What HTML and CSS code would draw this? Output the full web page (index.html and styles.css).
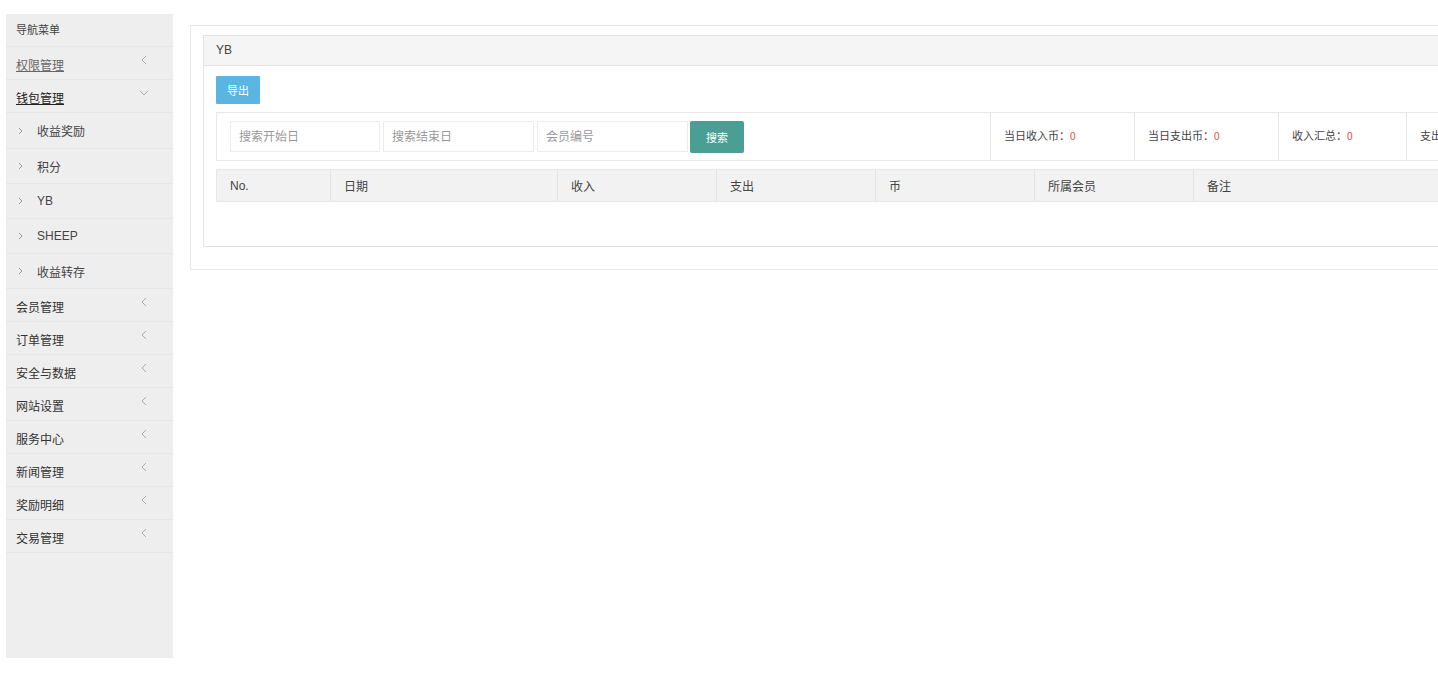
FILE: index.html
```html
<!DOCTYPE html>
<html lang="zh-CN">
<head>
<meta charset="utf-8">
<title>YB</title>
<link rel="stylesheet" href="styles.css">
</head>
<body>
<div class="page">
  <aside class="sidebar">
    <div class="side-title">导航菜单</div>
    <div class="side-item"><span class="link muted">权限管理</span><svg class="chev" viewBox="0 0 6 10"><path d="M5 1 1 5l4 4"/></svg></div>
    <div class="side-item"><span class="link">钱包管理</span><svg class="chev down" viewBox="0 0 10 6"><path d="M1 1l4 4 4-4"/></svg></div>
    <div class="sub-item"><svg class="sub-chev" viewBox="0 0 5 8"><path d="M1 1l3 3-3 3"/></svg><span>收益奖励</span></div>
    <div class="sub-item"><svg class="sub-chev" viewBox="0 0 5 8"><path d="M1 1l3 3-3 3"/></svg><span>积分</span></div>
    <div class="sub-item"><svg class="sub-chev" viewBox="0 0 5 8"><path d="M1 1l3 3-3 3"/></svg><span>YB</span></div>
    <div class="sub-item"><svg class="sub-chev" viewBox="0 0 5 8"><path d="M1 1l3 3-3 3"/></svg><span>SHEEP</span></div>
    <div class="sub-item"><svg class="sub-chev" viewBox="0 0 5 8"><path d="M1 1l3 3-3 3"/></svg><span>收益转存</span></div>
    <div class="side-item"><span>会员管理</span><svg class="chev" viewBox="0 0 6 10"><path d="M5 1 1 5l4 4"/></svg></div>
    <div class="side-item"><span>订单管理</span><svg class="chev" viewBox="0 0 6 10"><path d="M5 1 1 5l4 4"/></svg></div>
    <div class="side-item"><span>安全与数据</span><svg class="chev" viewBox="0 0 6 10"><path d="M5 1 1 5l4 4"/></svg></div>
    <div class="side-item"><span>网站设置</span><svg class="chev" viewBox="0 0 6 10"><path d="M5 1 1 5l4 4"/></svg></div>
    <div class="side-item"><span>服务中心</span><svg class="chev" viewBox="0 0 6 10"><path d="M5 1 1 5l4 4"/></svg></div>
    <div class="side-item"><span>新闻管理</span><svg class="chev" viewBox="0 0 6 10"><path d="M5 1 1 5l4 4"/></svg></div>
    <div class="side-item"><span>奖励明细</span><svg class="chev" viewBox="0 0 6 10"><path d="M5 1 1 5l4 4"/></svg></div>
    <div class="side-item"><span>交易管理</span><svg class="chev" viewBox="0 0 6 10"><path d="M5 1 1 5l4 4"/></svg></div>
  </aside>

  <main class="main">
    <div class="outer">
      <div class="panel">
        <div class="panel-head">YB</div>
        <div class="panel-body">
          <button class="btn-export">导出</button>
          <div class="search-row">
            <div class="search-form">
              <input class="inp i1" placeholder="搜索开始日">
              <input class="inp" placeholder="搜索结束日">
              <input class="inp" placeholder="会员编号">
              <button class="btn-search">搜索</button>
            </div>
            <div class="stat s1">当日收入币：<b>0</b></div>
            <div class="stat s2">当日支出币：<b>0</b></div>
            <div class="stat s3">收入汇总：<b>0</b></div>
            <div class="stat s4">支出汇总：<b>0</b></div>
          </div>
          <div class="thead">
            <div class="th c1">No.</div>
            <div class="th c2">日期</div>
            <div class="th c3">收入</div>
            <div class="th c3">支出</div>
            <div class="th c3">币</div>
            <div class="th c3">所属会员</div>
            <div class="th c7">备注</div>
          </div>
        </div>
      </div>
    </div>
  </main>
</div>
</body>
</html>
```

FILE: styles.css
```css
html, body {
  margin: 0;
  padding: 0;
  overflow: hidden;
  background: #fff;
}
body {
  font-family: "Liberation Sans", "Noto Sans CJK SC", sans-serif;
  font-size: 12px;
  color: #333;
}
.page {
  display: flex;
  align-items: flex-start;
  padding: 14px 0 0 6px;
  width: 1700px;
}
.sidebar {
  width: 167px;
  height: 644px;
  background: #eeeeee;
  flex: none;
}
.side-title {
  height: 33px;
  line-height: 33px;
  padding-left: 10px;
  font-size: 11px;
  border-bottom: 1px solid #e6e6e6;
  box-sizing: border-box;
  color: #444;
}
.side-item {
  height: 33px;
  box-sizing: border-box;
  border-bottom: 1px solid #e6e6e6;
  display: flex;
  align-items: center;
  justify-content: space-between;
  padding: 0 26px 0 10px;
  color: #333;
}
.side-item span {
  position: relative;
  top: 1px;
}
.link {
  text-decoration: underline;
  color: #222;
}
.link.muted {
  color: #666;
}
.chev {
  width: 6px;
  height: 10px;
  margin-top: -6px;
  fill: none;
  stroke: #aaa;
  stroke-width: 1;
}
.chev.down {
  width: 10px;
  height: 6px;
  margin-right: -2px;
}
.sub-item {
  height: 35px;
  box-sizing: border-box;
  border-bottom: 1px solid #e6e6e6;
  display: flex;
  align-items: center;
  padding-left: 12px;
  color: #444;
}
.sub-item:nth-of-type(4) { height: 36px; }
.sub-item:last-of-type { height: 36px; }
.sub-chev {
  width: 5px;
  height: 8px;
  fill: none;
  stroke: #999;
  stroke-width: 1;
  margin-right: 14px;
}
.main {
  flex: none;
  padding: 11px 0 0 17px;
}
.outer {
  width: 1500px;
  border: 1px solid #e8e8e8;
  padding: 9px 0 22px 12px;
}
.panel {
  border: 1px solid #e3e3e3;
  height: 210px;
}
.panel-head {
  height: 29px;
  line-height: 29px;
  background: #f5f5f5;
  border-bottom: 1px solid #e3e3e3;
  padding-left: 12px;
  color: #444;
}
.panel-body {
  padding: 10px 0 0 12px;
}
.btn-export {
  display: block;
  width: 44px;
  height: 28px;
  border: none;
  border-radius: 1px;
  background: #5ab6e1;
  color: #fff;
  font: inherit;
  font-size: 11px;
  padding: 0;
}
.search-row {
  margin-top: 8px;
  height: 49px;
  box-sizing: border-box;
  border: 1px solid #e8e8e8;
  display: flex;
  align-items: stretch;
}
.search-form {
  width: 773px;
  box-sizing: border-box;
  display: flex;
  align-items: center;
  padding-left: 13px;
  gap: 3px;
}
.inp {
  width: 151px;
  height: 31px;
  box-sizing: border-box;
  border: 1px solid #ececec;
  padding: 0 8px;
  font: inherit;
  font-size: 12px;
  color: #333;
  outline: none;
}
.inp.i1 { width: 150px; }
.inp::placeholder {
  color: #999;
}
.btn-search {
  margin-left: -1px;
  width: 54px;
  height: 32px;
  border: none;
  border-radius: 2px;
  background: #4a9e93;
  color: #fff;
  font: inherit;
  font-size: 11px;
  padding: 0;
}
.stat {
  border-left: 1px solid #e8e8e8;
  line-height: 46px;
  padding-left: 13px;
  box-sizing: border-box;
  font-size: 11px;
  color: #444;
  white-space: nowrap;
}
.stat b {
  font-weight: normal;
  color: #e04848;
  font-size: 10px;
}
.s1, .s2 { width: 144px; }
.s3 { width: 128px; }
.s4 { width: 200px; }
.thead {
  margin-top: 8px;
  height: 33px;
  box-sizing: border-box;
  background: #f2f2f2;
  border: 1px solid #e6e6e6;
  display: flex;
}
.th {
  display: flex;
  align-items: center;
  padding-left: 13px;
  box-sizing: border-box;
  border-left: 1px solid #e3e3e3;
  color: #444;
}
.th.c1 { width: 113px; border-left: none; }
.th.c2 { width: 227px; }
.th.c3 { width: 159px; }
.th.c7 { width: 400px; }
```
